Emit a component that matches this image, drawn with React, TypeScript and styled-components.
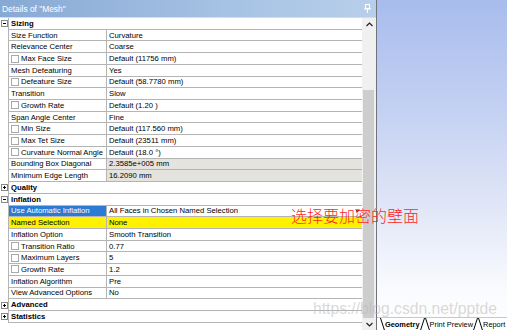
import React from "react";
import styled, { createGlobalStyle } from "styled-components";

const GlobalStyle = createGlobalStyle`
  html, body {
    margin: 0;
    padding: 0;
    background: #ffffff;
  }
  #root {
    width: 507px;
    height: 330px;
    overflow: hidden;
  }
`;

type Tone = "plain" | "readonly" | "selected" | "highlight";

type Item =
  | { kind: "head"; label: string; open: boolean }
  | { kind: "prop"; name: string; value: string; check?: boolean; tone?: Tone; combo?: boolean };

const items: Item[] = [
  { kind: "head", label: "Sizing", open: true },
  { kind: "prop", name: "Size Function", value: "Curvature" },
  { kind: "prop", name: "Relevance Center", value: "Coarse" },
  { kind: "prop", name: "Max Face Size", value: "Default (11756 mm)", check: true },
  { kind: "prop", name: "Mesh Defeaturing", value: "Yes" },
  { kind: "prop", name: "Defeature Size", value: "Default (58.7780 mm)", check: true },
  { kind: "prop", name: "Transition", value: "Slow" },
  { kind: "prop", name: "Growth Rate", value: "Default (1.20 )", check: true },
  { kind: "prop", name: "Span Angle Center", value: "Fine" },
  { kind: "prop", name: "Min Size", value: "Default (117.560 mm)", check: true },
  { kind: "prop", name: "Max Tet Size", value: "Default (23511 mm)", check: true },
  { kind: "prop", name: "Curvature Normal Angle", value: "Default (18.0 °)", check: true },
  { kind: "prop", name: "Bounding Box Diagonal", value: "2.3585e+005 mm", tone: "readonly" },
  { kind: "prop", name: "Minimum Edge Length", value: "16.2090 mm", tone: "readonly" },
  { kind: "head", label: "Quality", open: false },
  { kind: "head", label: "Inflation", open: true },
  { kind: "prop", name: "Use Automatic Inflation", value: "All Faces in Chosen Named Selection", tone: "selected", combo: true },
  { kind: "prop", name: "Named Selection", value: "None", tone: "highlight" },
  { kind: "prop", name: "Inflation Option", value: "Smooth Transition" },
  { kind: "prop", name: "Transition Ratio", value: "0.77", check: true },
  { kind: "prop", name: "Maximum Layers", value: "5", check: true },
  { kind: "prop", name: "Growth Rate", value: "1.2", check: true },
  { kind: "prop", name: "Inflation Algorithm", value: "Pre" },
  { kind: "prop", name: "View Advanced Options", value: "No" },
  { kind: "head", label: "Advanced", open: false },
  { kind: "head", label: "Statistics", open: false },
];

const Screen = styled.div`
  position: relative;
  display: flex;
  width: 507px;
  height: 330px;
  font-family: "Liberation Sans", Arial, sans-serif;
`;

const Panel = styled.div`
  width: 376px;
  flex: none;
  display: flex;
  flex-direction: column;
  border-right: 1px solid #6f747c;
  background: #ffffff;
`;

const TitleBar = styled.div`
  height: 17px;
  flex: none;
  display: flex;
  align-items: center;
  justify-content: space-between;
  padding: 0 5px 0 2px;
  background: linear-gradient(to right, #87a9d5, #a6c2e4 60%, #b8cfea);
  border-bottom: 1px solid #d6dde8;
  color: #ffffff;
  font-size: 8.4px;
`;

const Body = styled.div`
  flex: 1;
  display: flex;
  min-height: 0;
`;

const Grid = styled.div`
  flex: 1;
  display: flex;
  flex-direction: column;
  background: #ffffff;
`;

const Row = styled.div`
  display: flex;
  height: 11.72px;
  flex: none;
  font-size: 7.7px;
  color: #000000;
`;

const Gutter = styled.div`
  width: 9px;
  flex: none;
  box-sizing: border-box;
  border-right: 1px solid #b4b4b4;
  display: flex;
  align-items: center;
  padding-left: 1px;
`;

const Expander = styled.div`
  width: 7px;
  height: 7px;
  box-sizing: border-box;
  border: 1px solid #8a8a8a;
  background: #ffffff;
  position: relative;
  &::before {
    content: "";
    position: absolute;
    left: 1px;
    right: 1px;
    top: 2px;
    height: 1px;
    background: #000000;
  }
  &::after {
    content: "";
    display: ${(p: { open: boolean }) => (p.open ? "none" : "block")};
    position: absolute;
    top: 1px;
    bottom: 1px;
    left: 2px;
    width: 1px;
    background: #000000;
  }
`;

const HeadCell = styled.div`
  flex: 1;
  box-sizing: border-box;
  border-bottom: 1px solid #b4b4b4;
  display: flex;
  align-items: center;
  padding-left: 2px;
  font-weight: bold;
`;

const cellBg: Record<Tone, string> = {
  plain: "#ffffff",
  readonly: "#e5e3de",
  selected: "#2a7bd3",
  highlight: "#fff200",
};

const NameCell = styled.div<{ tone: Tone }>`
  width: 98px;
  flex: none;
  box-sizing: border-box;
  border-right: 1px solid #b4b4b4;
  border-bottom: 1px solid #b4b4b4;
  display: flex;
  align-items: center;
  gap: 2px;
  padding-left: 2px;
  white-space: nowrap;
  overflow: hidden;
  background: ${(p) => (p.tone === "selected" || p.tone === "highlight" ? cellBg[p.tone] : "#ffffff")};
  color: ${(p) => (p.tone === "selected" ? "#ffffff" : "#000000")};
`;

const ValueCell = styled.div<{ tone: Tone }>`
  flex: 1;
  box-sizing: border-box;
  border-bottom: 1px solid #b4b4b4;
  display: flex;
  align-items: center;
  justify-content: space-between;
  padding: 0 2px;
  white-space: nowrap;
  background: ${(p) => (p.tone === "readonly" || p.tone === "highlight" ? cellBg[p.tone] : "#ffffff")};
`;

const CheckBox = styled.span`
  width: 8px;
  height: 8px;
  flex: none;
  box-sizing: border-box;
  border: 1px solid #a9a9a9;
  background: #ffffff;
`;

const ScrollBar = styled.div`
  width: 14px;
  flex: none;
  display: flex;
  flex-direction: column;
  background: #f0f0f0;
`;

const ArrowButton = styled.div`
  height: 12px;
  flex: none;
  display: flex;
  align-items: center;
  justify-content: center;
`;

const Track = styled.div`
  flex: 1;
  display: flex;
  flex-direction: column;
  padding: 60px 2px 0 1px;
`;

const Thumb = styled.div`
  flex: 1;
  background: #cdcdcd;
`;

const Viewport = styled.div`
  flex: 1;
  display: flex;
  flex-direction: column;
  justify-content: flex-end;
  background: linear-gradient(to bottom, #a8bced 0%, #c4d1f2 34%, #e4e9f8 66%, #fafbfe 88%, #ffffff 100%);
`;

const TabStrip = styled.div`
  height: 12px;
  display: flex;
  align-items: stretch;
  padding-left: 2px;
  background: #ffffff;
  border-top: 1px solid #c8c8c8;
  overflow: hidden;
`;

const Tab = styled.div<{ active?: boolean }>`
  position: relative;
  display: flex;
  align-items: center;
  padding: 0 6px 0 6px;
  margin-right: -2px;
  font-size: 7.4px;
  font-weight: ${(p) => (p.active ? "bold" : "normal")};
  white-space: nowrap;
  z-index: ${(p) => (p.active ? 2 : 1)};
  &::before,
  &::after {
    content: "";
    position: absolute;
    top: 0;
    bottom: 0;
    width: 1px;
    background: #000000;
    transform-origin: top;
  }
  &::before {
    left: 1px;
    transform: skewX(18deg);
  }
  &::after {
    right: 1px;
    transform: skewX(-18deg);
  }
`;

const Annotation = styled.div`
  position: absolute;
  left: 291px;
  top: 207px;
  font-family: "Noto Sans CJK SC", "Noto Sans", sans-serif;
  font-size: 16px;
  line-height: 17px;
  font-weight: 300;
  color: #ff1f1f;
  white-space: nowrap;
  pointer-events: none;
`;

const Watermark = styled.div`
  position: absolute;
  left: 313px;
  top: 300px;
  font-family: "Liberation Sans", Arial, sans-serif;
  font-size: 15.7px;
  line-height: 18px;
  color: rgba(185, 185, 185, 0.55);
  white-space: nowrap;
  pointer-events: none;
`;

const Pin = () => (
  <svg width="7" height="9" viewBox="0 0 7 9">
    <rect x="1.5" y="0.5" width="4" height="4" fill="none" stroke="#ffffff" />
    <line x1="0" y1="5" x2="7" y2="5" stroke="#ffffff" />
    <line x1="3.5" y1="5" x2="3.5" y2="9" stroke="#ffffff" />
  </svg>
);

const Chevron = ({ up }: { up?: boolean }) => (
  <svg width="7" height="5" viewBox="0 0 7 5">
    <polyline
      points={up ? "0.5,4 3.5,1 6.5,4" : "0.5,1 3.5,4 6.5,1"}
      fill="none"
      stroke="#222222"
      strokeWidth="1.2"
    />
  </svg>
);

const ComboArrow = () => (
  <svg width="5" height="4" viewBox="0 0 5 4">
    <path d="M0 0.5 L5 0.5 L2.5 3.5 Z" fill="#333333" />
  </svg>
);

export default function App() {
  return (
    <>
      <GlobalStyle />
      <Screen>
        <Panel>
          <TitleBar>
            <span>Details of "Mesh"</span>
            <Pin />
          </TitleBar>
          <Body>
            <Grid>
              {items.map((it, i) =>
                it.kind === "head" ? (
                  <Row key={i}>
                    <Gutter>
                      <Expander open={it.open} />
                    </Gutter>
                    <HeadCell>{it.label}</HeadCell>
                  </Row>
                ) : (
                  <Row key={i}>
                    <Gutter />
                    <NameCell tone={it.tone ?? "plain"}>
                      {it.check && <CheckBox />}
                      {it.name}
                    </NameCell>
                    <ValueCell tone={it.tone ?? "plain"}>
                      <span>{it.value}</span>
                      {it.combo && <ComboArrow />}
                    </ValueCell>
                  </Row>
                )
              )}
            </Grid>
            <ScrollBar>
              <ArrowButton>
                <Chevron up />
              </ArrowButton>
              <Track>
                <Thumb />
              </Track>
              <ArrowButton>
                <Chevron />
              </ArrowButton>
            </ScrollBar>
          </Body>
        </Panel>
        <Viewport>
          <TabStrip>
            <Tab active>Geometry</Tab>
            <Tab>Print Preview</Tab>
            <Tab>Report Preview</Tab>
          </TabStrip>
        </Viewport>
        <Annotation>选择要加密的壁面</Annotation>
        <Watermark>https://blog.csdn.net/pptde</Watermark>
      </Screen>
    </>
  );
}
